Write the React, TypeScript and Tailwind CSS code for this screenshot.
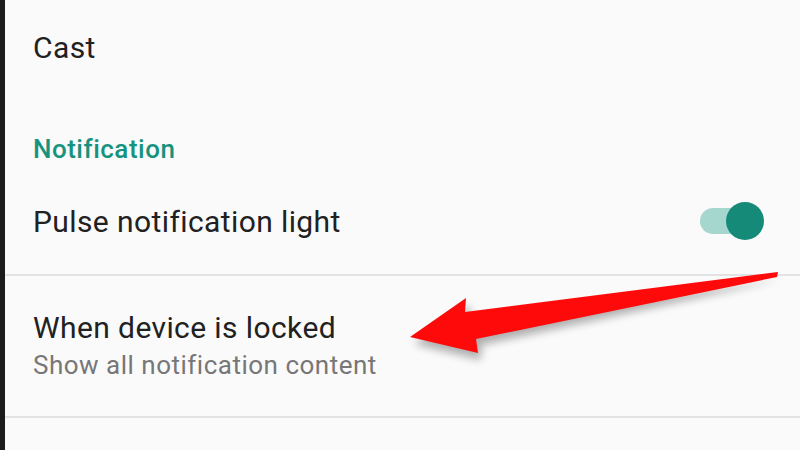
export default function App() {
  return (
    <div
      className="relative flex h-[450px] w-[800px] overflow-hidden bg-[#fafafa]"
      style={{ fontFamily: "Roboto, 'Noto Sans', sans-serif" }}
    >
      <div className="w-[5px] shrink-0 bg-[#1c1c1c]" />
      <div className="flex flex-1 flex-col">
        <div className="flex h-[92px] items-center pl-[28px] pt-[2px] text-[30px] tracking-[0.4px] text-[#212121]">
          Cast
        </div>
        <div className="flex h-[78px] items-end pb-[6px] pl-[28px] text-[26px] leading-[30px] font-medium tracking-[0.5px] text-[#16937f]">
          Notification
        </div>
        <div className="flex h-[104px] items-center justify-between pl-[28px] pr-[36px] pb-[2px]">
          <span className="text-[30px] tracking-[0.4px] text-[#212121]">Pulse notification light</span>
          <div className="relative flex h-[38px] w-[64px] items-center">
            <div className="h-[26px] w-[56px] rounded-full bg-[#a6d7cf]" />
            <div className="absolute right-0 h-[38px] w-[38px] rounded-full bg-[#168a78]" />
          </div>
        </div>
        <div className="h-[2px] bg-[#e2e2e2]" />
        <div className="flex h-[140px] flex-col justify-center pl-[28px]">
          <span className="text-[30px] leading-[38px] tracking-[0.4px] text-[#212121]">When device is locked</span>
          <span className="text-[26px] leading-[36px] tracking-[0.5px] text-[#777777]">Show all notification content</span>
        </div>
        <div className="h-[2px] bg-[#e2e2e2]" />
        <div className="flex-1" />
      </div>
      <svg
        className="absolute left-0 top-0"
        width="800"
        height="450"
        viewBox="0 0 800 450"
      >
        <defs>
          <filter id="sh" x="-20%" y="-50%" width="140%" height="200%">
            <feGaussianBlur stdDeviation="4" />
          </filter>
        </defs>
        <polygon
          points="414,344 470,305 469,320 780,280 481,345 481,360"
          fill="#000"
          opacity="0.3"
          filter="url(#sh)"
        />
        <polygon
          points="410,337 466,298 465,312 778,272 777,277 476,339 478,353"
          fill="#ff0a0a"
        />
      </svg>
    </div>
  );
}
